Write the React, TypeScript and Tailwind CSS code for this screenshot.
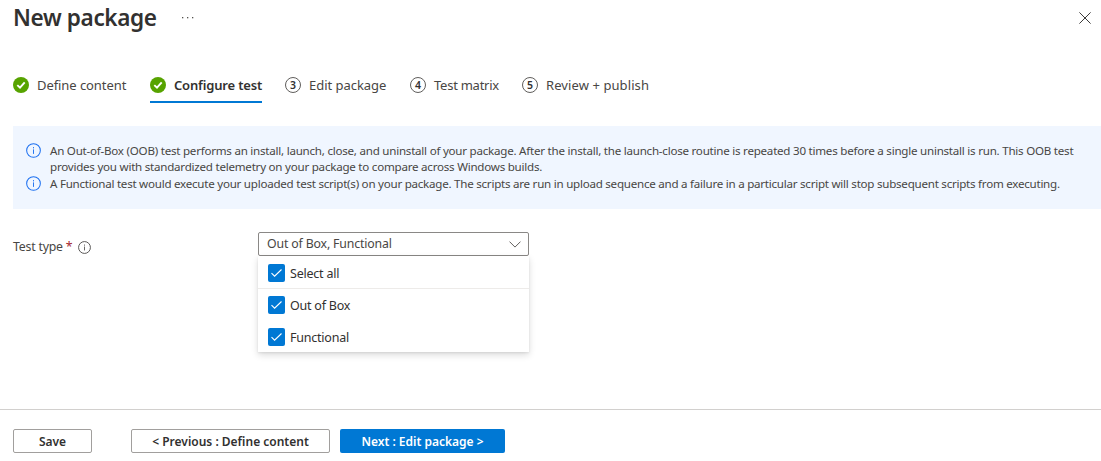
import type { ReactNode } from "react";

function DoneIcon() {
  return (
    <svg width="16" height="16" viewBox="0 0 16 16" className="shrink-0" aria-hidden="true">
      <circle cx="8" cy="8" r="8" fill="#57a300" />
      <path d="M4.3 8.1 7 10.7l4.7-5.3" fill="none" stroke="#fff" strokeWidth="1.9" />
    </svg>
  );
}

function StepNumber({ children }: { children: ReactNode }) {
  return (
    <span className="flex size-4 shrink-0 items-center justify-center rounded-full border border-[#605e5c] pt-px text-[10.5px] leading-none font-semibold text-[#323130]">
      {children}
    </span>
  );
}

function InfoIcon({ className }: { className: string }) {
  return (
    <svg viewBox="0 0 16 16" className={className} fill="none" stroke="currentColor" aria-hidden="true">
      <circle cx="8" cy="8" r="7.3" strokeWidth="1.1" />
      <path d="M8 6.8v4.8" strokeWidth="1" />
      <path d="M8 4.4v1.3" strokeWidth="1.1" />
    </svg>
  );
}

function Checkbox() {
  return (
    <span className="flex h-[18px] w-[17px] shrink-0 items-center justify-center rounded-[2px] bg-[#0078d4]">
      <svg width="11" height="8" viewBox="0 0 11 8" fill="none" stroke="#fff" strokeWidth="1.1" aria-hidden="true">
        <path d="M.5 4.2 3.6 7.2 10.5.5" />
      </svg>
    </span>
  );
}

function Option({ children, className }: { children: ReactNode; className: string }) {
  return (
    <div className={`flex items-center gap-[5px] pl-[10px] text-[12.5px] tracking-[-0.22px] text-[#323130] ${className}`}>
      <Checkbox />
      <span className="pt-0.5 leading-4">{children}</span>
    </div>
  );
}

export default function App() {
  return (
    <div className="flex h-[461px] w-full flex-col overflow-hidden bg-white font-['Noto_Sans','Open_Sans',sans-serif] text-[#3b3a39]">
      <header className="flex h-9 items-center pl-[13px]">
        <h1 className="w-[169px] text-[22.6px] leading-9 font-semibold tracking-[-0.38px] text-[#323130]">New package</h1>
        <svg width="12" height="2" viewBox="0 0 12 2" fill="#55534f" aria-hidden="true">
          <rect x="0" width="1.3" height="1.3" />
          <rect x="5" width="1.3" height="1.3" />
          <rect x="10" width="1.3" height="1.3" />
        </svg>
        <svg width="12" height="12" viewBox="0 0 12 12" className="mr-[10px] ml-auto" stroke="#3b3a39" strokeWidth="1" aria-hidden="true">
          <path d="M.4.4 11.6 11.6M11.6.4.4 11.6" />
        </svg>
      </header>

      <nav className="mt-[33px] flex h-[34px] pl-[13px] text-[13px] text-[#484644]">
        <div className="mr-[23px] flex h-[31px] w-[114px] items-center gap-2 whitespace-nowrap">
          <DoneIcon />
          <span className="pt-0.5 tracking-[-0.07px]">Define content</span>
        </div>
        <div className="mr-[23px] flex h-[34px] w-[112px] items-center gap-2 border-b-2 border-[#0078d4] pb-px font-semibold whitespace-nowrap text-[#323130]">
          <DoneIcon />
          <span className="pt-0.5 tracking-[-0.17px]">Configure test</span>
        </div>
        <div className="mr-[23px] flex h-[31px] w-[102px] items-center gap-2 whitespace-nowrap">
          <StepNumber>3</StepNumber>
          <span className="pt-0.5 tracking-[-0.03px]">Edit package</span>
        </div>
        <div className="mr-[23px] flex h-[31px] w-[89px] items-center gap-2 whitespace-nowrap">
          <StepNumber>4</StepNumber>
          <span className="pt-0.5 tracking-[-0.25px]">Test matrix</span>
        </div>
        <div className="flex h-[31px] items-center gap-2 whitespace-nowrap">
          <StepNumber>5</StepNumber>
          <span className="pt-0.5 tracking-[0.09px]">Review + publish</span>
        </div>
      </nav>

      <section className="mt-[23px] ml-[13px] flex h-[83px] flex-col bg-[#f0f6ff] pt-[17px] pl-[13px] text-[11.6px] leading-4 tracking-[-0.243px] whitespace-nowrap text-[#484644]">
        <div className="flex h-[33px] gap-[9px]">
          <InfoIcon className="size-[15px] shrink-0 text-[#1b6ff0]" />
          <p>
            An Out-of-Box (OOB) test performs an install, launch, close, and uninstall of your package. After the install,
            the launch-close routine is repeated 30 times before a single uninstall is run. This OOB test
            <br />
            provides you with standardized telemetry on your package to compare across Windows builds.
          </p>
        </div>
        <div className="flex gap-[9px]">
          <InfoIcon className="size-[15px] shrink-0 text-[#1b6ff0]" />
          <p className="tracking-[-0.253px]">
            A Functional test would execute your uploaded test script(s) on your package. The scripts are run in upload
            sequence and a failure in a particular script will stop subsequent scripts from executing.
          </p>
        </div>
      </section>

      <main className="mt-[23px] flex flex-1 items-start pl-[13px]">
        <div className="flex h-[29px] w-[245px] items-center text-[12.3px] text-[#484644]">
          <span className="pt-0.5 tracking-[-0.2px]">Test type</span>
          <span className="ml-[3px] pt-0.5 text-[#a4262c]">*</span>
          <InfoIcon className="mt-px ml-[5px] size-[13px] text-[#484644]" />
        </div>
        <div className="w-[271px]">
          <div className="flex h-6 items-center justify-between rounded-[2px] border border-[#8a8886] pr-[7px] pl-2 text-[12.3px] tracking-[-0.15px] text-[#484644]">
            <span className="leading-4">Out of Box, Functional</span>
            <svg width="12" height="7" viewBox="0 0 12 7" fill="none" stroke="#605e5c" strokeWidth="1" aria-hidden="true">
              <path d="M.5.6 6 6.1 11.5.6" />
            </svg>
          </div>
          <div className="h-24 bg-white shadow-[0_3px_7px_rgba(0,0,0,0.14),0_1px_2px_rgba(0,0,0,0.08)]">
            <Option className="h-[33px] border-b border-[#edebe9] pt-0.5">Select all</Option>
            <Option className="h-8">Out of Box</Option>
            <Option className="h-[31px]">Functional</Option>
          </div>
        </div>
      </main>

      <footer className="flex h-[52px] border-t border-[#d2d0ce] pt-[19px] pl-[13px] text-[12px] font-semibold whitespace-nowrap text-[#323130]">
        <button className="h-6 w-[79px] rounded-[2px] border border-[#a19f9d] pt-px leading-[22px]">Save</button>
        <button className="ml-[39px] h-6 w-[199px] rounded-[2px] border border-[#a19f9d] pt-px leading-[22px]">
          &lt; Previous : Define content
        </button>
        <button className="ml-[10px] h-6 w-[165px] rounded-[2px] bg-[#0078d4] pt-0.5 leading-[22px] text-white">
          Next : Edit package &gt;
        </button>
      </footer>
    </div>
  );
}
